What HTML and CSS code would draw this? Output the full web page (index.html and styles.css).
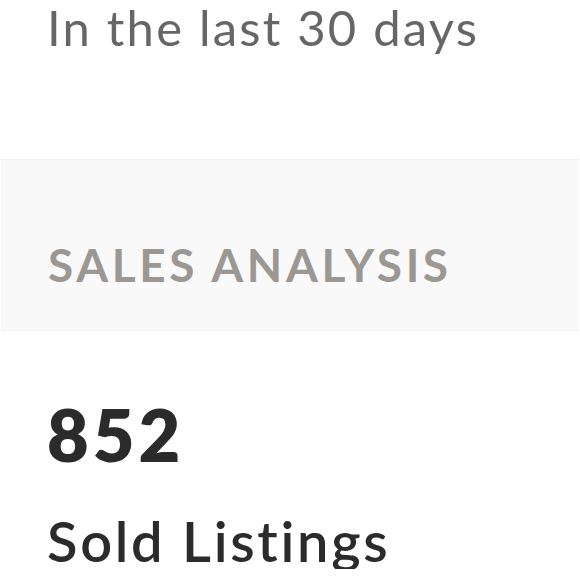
FILE: index.html
```html
<!DOCTYPE html>
<html lang="en">
<head>
    <meta charset="UTF-8">
    <meta name="viewport" content="width=device-width, initial-scale=1.0">
    <title>Sales Analysis</title>
    <link rel="stylesheet" href="styles.css">
</head>
<body>
    <div class="period">In the last 30 days</div>

    <div class="section-head">
        <div class="section-title">SALES ANALYSIS</div>
    </div>

    <div class="stat">
        <div class="stat-value">852</div>
        <div class="stat-label">Sold Listings</div>
    </div>
</body>
</html>
```

FILE: styles.css
```css
body {
    margin: 0;
    background-color: #fff;
    font-family: Lato, "Noto Sans", sans-serif;
    font-variant-ligatures: none;
}

.period {
    padding: 3px 0 0 47px;
    font-size: 49px;
    line-height: 1;
    letter-spacing: 2.2px;
    color: #666;
}

.section-head {
    margin: 107px 1px 0 1px;
    padding: 82px 0 42px 47px;
    background-color: #faf9f9;
    border-top: 1px solid #f3f1ef;
    border-bottom: 1px solid #f3f1ef;
}

.section-title {
    font-size: 46px;
    font-weight: 700;
    line-height: 1;
    letter-spacing: 3.6px;
    color: #9b9894;
}

.stat {
    display: flex;
    flex-direction: column;
    gap: 43px;
    padding: 67px 0 0 47px;
}

.stat-value {
    font-size: 72px;
    font-weight: 800;
    line-height: 1;
    letter-spacing: 4px;
    color: #2b2b2b;
}

.stat-label {
    font-size: 56px;
    font-weight: 600;
    line-height: 1;
    letter-spacing: 2.7px;
    color: #2b2b2b;
}
```
